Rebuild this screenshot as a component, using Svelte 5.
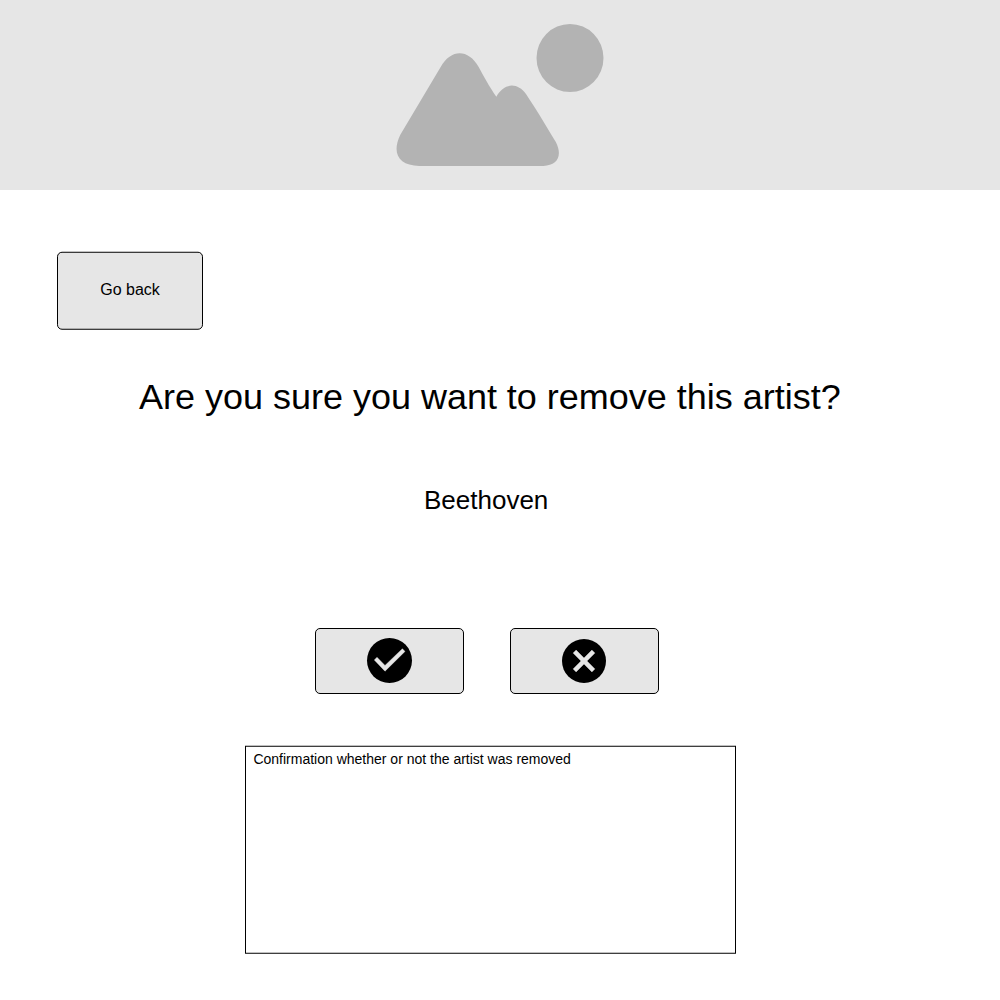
<script>
  const artist = 'Beethoven';
  let message = $state('Confirmation whether or not the artist was removed');
</script>

<div class="page">
  <header class="banner">
    <svg class="landscape" width="240" height="190" viewBox="0 0 720 570" aria-hidden="true">
      <path d="M61 374 L182 171 C213 116 265 116 296 171 C313 202 326 227 349 260 C374 217 412 217 438 252 C466 294 497 345 527 395 C549 438 532 467 490 468 L118 468 C56 467 34 430 61 374 Z" />
      <ellipse cx="570" cy="144" rx="100.5" ry="102" />
    </svg>
  </header>

  <main>
    <button class="box back">
      <svg class="frame" width="147" height="79" aria-hidden="true">
        <rect class="fill" x="0.5" y="1.25" width="145" height="77" rx="4.5" />
      </svg>
      <span>Go back</span>
    </button>

    <h1>Are you sure you want to remove this artist?</h1>
    <p class="artist">{artist}</p>

    <div class="actions">
      <button class="box action" aria-label="Confirm">
        <svg width="149" height="66" viewBox="0 0 149 66" aria-hidden="true">
          <rect class="fill" x="0.5" y="0.5" width="148" height="65" rx="4.5" />
          <circle cx="74.5" cy="32.5" r="22.5" />
          <path class="mark" d="M59.3 32 L62 29.3 L70 37.4 L87.4 20.7 L90 23.4 L70 43.2 Z" />
        </svg>
      </button>
      <button class="box action" aria-label="Cancel">
        <svg width="149" height="66" viewBox="0 0 149 66" aria-hidden="true">
          <rect class="fill" x="0.5" y="0.5" width="148" height="65" rx="4.5" />
          <circle cx="74" cy="33" r="22" />
          <path class="mark" d="M63.1 25.1 L66.1 22.1 L74 30 L81.9 22.1 L84.9 25.1 L77 33 L84.9 40.9 L81.9 43.9 L74 36 L66.1 43.9 L63.1 40.9 L71 33 Z" />
        </svg>
      </button>
    </div>

    <section class="box result">
      <svg class="frame" width="491" height="209" aria-hidden="true">
        <rect class="outline" x="0.5" y="1.25" width="490" height="207" />
      </svg>
      <p>{message}</p>
    </section>
  </main>
</div>

<style>
  :global(body) {
    margin: 0;
    background: #fff;
  }

  .page {
    width: 1000px;
    height: 1000px;
    overflow: hidden;
    color: #000;
    font-family: 'Liberation Sans', Arial, sans-serif;
  }

  .banner {
    display: flex;
    justify-content: center;
    height: 190px;
    background: #e6e6e6;
  }

  .landscape {
    margin-top: 10px;
    fill: #b3b3b3;
  }

  main {
    display: flex;
    flex-direction: column;
    align-items: flex-start;
    padding-top: 61px;
  }

  h1,
  p {
    margin: 0;
    font-weight: 400;
    white-space: nowrap;
  }

  /* The frame and the content share one grid cell. */
  .box {
    display: grid;
    padding: 0;
    border: 0;
    background: none;
    color: inherit;
    font: inherit;
  }

  .box > * {
    grid-area: 1 / 1;
  }

  .fill,
  .outline {
    stroke: #000;
    stroke-width: 1;
  }

  .fill,
  .mark {
    fill: #e6e6e6;
  }

  .mark {
    stroke: #e6e6e6;
    stroke-width: 0.4;
    stroke-linejoin: round;
  }

  .outline {
    fill: #fff;
  }

  .back {
    width: 147px;
    height: 79px;
    margin-left: 57px;
    font-size: 16px;
    line-height: 18px;
  }

  .back span {
    place-self: start center;
    margin-top: 30px;
    margin-right: 1px;
  }

  h1 {
    margin: 46px 0 0 139px;
    font-size: 35.97px;
    line-height: 41px;
  }

  .artist {
    margin: 68px 0 0 424px;
    font-size: 26px;
    line-height: 30px;
  }

  .actions {
    display: flex;
    gap: 46px;
    margin: 113px 0 0 315px;
  }

  .action {
    width: 149px;
    height: 66px;
  }

  .result {
    width: 491px;
    height: 209px;
    margin: 51px 0 0 245px;
  }

  .result p {
    place-self: start;
    margin: 6px 0 0 8.4px;
    font-size: 14px;
    line-height: 16px;
  }
</style>
